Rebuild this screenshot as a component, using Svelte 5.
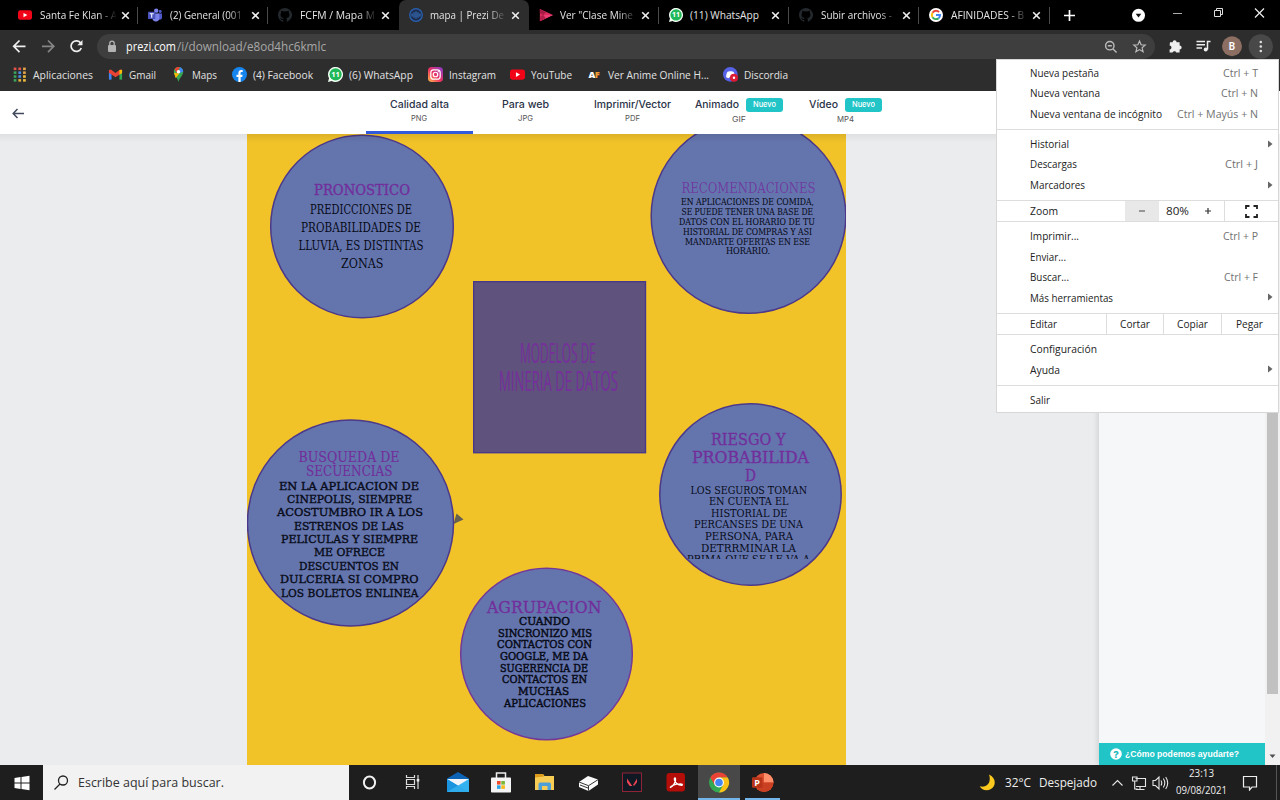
<script>
  const tabs = [
    ['yt', 'Santa Fe Klan - A', 77], ['teams', '(2) General (001', 72], ['github', 'FCFM / Mapa M', 75],
    ['prezi', 'mapa | Prezi De', 74], ['stream', 'Ver "Clase Mine', 73], ['wa', '(11) WhatsApp', 69],
    ['github', 'Subir archivos -', 71], ['google', 'AFINIDADES - B', 73]
  ];
  const bookmarks = [
    ['apps', 'Aplicaciones', 60, 33], ['gmail', 'Gmail', 27, 129], ['maps', 'Maps', 25, 192],
    ['fb', '(4) Facebook', 60, 253], ['wa', '(6) WhatsApp', 64, 349], ['insta', 'Instagram', 47, 449],
    ['yt', 'YouTube', 41, 531], ['af', 'Ver Anime Online H...', 101, 608], ['discord', 'Discordia', 44, 744]
  ];
  const formats = [
    ['Calidad alta', 59, 'PNG', 16], ['Para web', 47, 'JPG', 15], ['Imprimir/Vector', 77, 'PDF', 15],
    ['Animado', 44, 'GIF', 14, true], ['Vídeo', 29, 'MP4', 17, true]
  ];
  const top = [
    [['Nueva pestaña', 69, 'Ctrl + T', 35], ['Nueva ventana', 70, 'Ctrl + N', 37], ['Nueva ventana de incógnito', 132, 'Ctrl + Mayús + N', 81]],
    [['Historial', 39, '>'], ['Descargas', 47, 'Ctrl + J', 33], ['Marcadores', 55, '>']]
  ];
  const tools = [['Imprimir...', 49, 'Ctrl + P', 35], ['Enviar...', 36], ['Buscar...', 39, 'Ctrl + F', 34], ['Más herramientas', 83, '>']];
  const help = [['Configuración', 67], ['Ayuda', 30, '>']];
  const circles = [
    [362, 226.5, 91.3, '#4c398a'], [748.5, 216, 97.3, '#4c398a'], [350.5, 523, 103, '#4c398a'],
    [546.5, 654, 85.8, '#743997'], [750.5, 494.5, 90.7, '#4c398a']
  ];
  // text, left, right, baseline
  const blocks = [
    { size: 15, head: true, w: .4, lines: [['PRONOSTICO', 314, 410, 195.3]] },
    { size: 12.3, w: 0, lines: [['PREDICCIONES DE', 310, 412, 214], ['PROBABILIDADES DE', 301, 421, 232], ['LLUVIA, ES DISTINTAS', 298.5, 423.5, 250], ['ZONAS', 341, 383.5, 268]] },
    { size: 14.5, head: true, w: 0, thin: true, lines: [['RECOMENDACIONES', 681.5, 815.5, 193]] },
    { size: 9.2, w: .1, lines: [['EN APLICACIONES DE COMIDA,', 681, 814, 205], ['SE PUEDE TENER UNA BASE DE', 681.5, 813, 215], ['DATOS CON EL HORARIO DE TU', 679, 815, 224.6], ['HISTORIAL DE COMPRAS Y ASI', 683, 812, 234.5], ['MANDARTE OFERTAS EN ESE', 685, 810, 244.5], ['HORARIO.', 726, 770, 254]] },
    { size: 14.3, head: true, w: .15, lines: [['BUSQUEDA DE', 298.5, 399.5, 462], ['SECUENCIAS', 306, 392.5, 476.3]] },
    { size: 11.8, w: .4, lines: [['EN LA APLICACION DE', 279, 419, 489.8], ['CINEPOLIS, SIEMPRE', 287, 412, 503], ['ACOSTUMBRO IR A LOS', 277, 423, 516.3], ['ESTRENOS DE LAS', 294, 404, 529.8], ['PELICULAS Y SIEMPRE', 281, 418, 543], ['ME OFRECE', 314, 385, 556.3], ['DESCUENTOS EN', 299, 399, 569.8], ['DULCERIA SI COMPRO', 280, 418.5, 583], ['LOS BOLETOS ENLINEA', 281, 418.5, 596.5]] },
    { size: 16, head: true, w: .35, lines: [['AGRUPACION', 487, 601.5, 612.8]] },
    { size: 11.2, w: .5, lines: [['CUANDO', 519, 570, 625.3], ['SINCRONIZO MIS', 498, 592, 636.8], ['CONTACTOS CON', 497, 592, 648.4], ['GOOGLE, ME DA', 500, 588, 660], ['SUGERENCIA DE', 500, 588, 671.6], ['CONTACTOS EN', 502, 587, 683.3], ['MUCHAS', 518, 569, 694.8], ['APLICACIONES', 504, 586, 706.6]] },
    { size: 16, head: true, w: .35, lines: [['RIESGO Y', 711, 785.5, 444.8], ['PROBABILIDA', 692, 809, 462.8], ['D', 745, 756, 480.8]] },
    { size: 11.2, w: 0, clip: true, lines: [['LOS SEGUROS TOMAN', 690.5, 807, 493.6], ['EN CUENTA EL', 709, 788.5, 505.2], ['HISTORIAL DE', 711, 787.5, 516.8], ['PERCANSES DE UNA', 694, 803, 528.4], ['PERSONA, PARA', 705, 793, 540], ['DETRRMINAR LA', 701, 796, 551.6], ['PRIMA QUE SE LE VA A', 687, 810, 563.2]] }
  ];
</script>

{#snippet label(text, w, size = 11, color = '#222', weight = 400, family = 'Open Sans')}
  <svg class="label" width={w} height={size * 1.42} aria-label={text}>
    <text x="0" y={size * 1.07} textLength={w} lengthAdjust="spacingAndGlyphs" fill={color} style:font-size="{size}px" style:font-weight={weight} style:font-family="'{family}', sans-serif">{text}</text>
  </svg>
{/snippet}

{#snippet icon(name, size = 15)}
  <svg class="icon" width={size} height={size} viewBox="0 0 16 16">
    {#if name === 'yt'}
      <rect x="0" y="2.7" width="16" height="10.8" rx="2.6" fill="#f20418" /><path d="M6.3 5.6v5l4.4-2.5z" fill="#fff" />
    {:else if name === 'teams'}
      <circle cx="9.4" cy="3" r="2.5" fill="#7b83eb" /><circle cx="14" cy="4" r="1.7" fill="#5059c9" /><path d="M11 6.4h5v4.5c0 2-2 3-3.4 2.2z" fill="#5059c9" /><path d="M5 6.3h8v5.2c0 2.5-1.5 4-4 4s-4-1.5-4-4z" fill="#7b83eb" /><rect y="4.3" width="8.4" height="8.4" rx=".8" fill="#4b53bc" /><path d="M2 6.5h4.5M4.25 6.5v4.6" stroke="#fff" stroke-width="1.2" />
    {:else if name === 'github'}
      <path fill="#24292e" d="M8 0C3.58 0 0 3.58 0 8c0 3.54 2.29 6.53 5.47 7.59.4.07.55-.17.55-.38v-1.49c-2.01.37-2.53-.49-2.69-.94-.36-.92-.85-1.26-.85-1.26-.7-.48.05-.47.05-.47.77.05 1.18.8 1.18.8.7 1.19 1.87.86 2.33.66.07-.52.28-.86.51-1.06-1.78-.2-3.64-.89-3.64-3.95 0-.87.31-1.59.82-2.15-.08-.2-.36-1.02.08-2.12 0 0 .67-.21 2.2.82A7.4 7.4 0 0 1 8 3.77c.68 0 1.36.09 2 .27 1.53-1.04 2.2-.82 2.2-.82.44 1.1.16 1.92.08 2.12.51.56.82 1.27.82 2.15 0 3.07-1.87 3.75-3.65 3.95.29.25.54.73.54 1.48v2.29c0 .21.15.46.55.38A8 8 0 0 0 8 0z" />
    {:else if name === 'prezi'}
      <circle cx="8" cy="8" r="7.2" fill="#1d2f50" stroke="#2a62b5" stroke-width="1.4" /><path d="M3.5 6.3v3.4M5.750 5v6M8 4v8M10.250 5v6M12.500 6.300v3.400" stroke="#3f83dc" stroke-width="1" />
    {:else if name === 'stream'}
      <path d="M1 1.2 16 8 1 15z" fill="#dc2c5d" /><path d="M1 1.2 8 4.5 5 8 1 6z" fill="#a81b45" /><path d="M1 15 16 8H5z" fill="#ec3f75" /><path d="M1 10l4-2 3 4-7 3z" fill="#b31e4a" />
    {:else if name === 'wa'}
      <path d="M0 16 1.1 12A8 8 0 1 1 4 14.9z" fill="#f3fff5" /><circle cx="8.1" cy="7.9" r="6.5" fill="#20b858" /><text x="8" y="10.8" text-anchor="middle" font-size="8" font-weight="700" fill="#fff" font-family="Open Sans">11</text>
    {:else if name === 'google'}
      <circle cx="8" cy="8" r="8" fill="#fff" /><g fill="none" stroke-width="2.2"><path d="M4 5.4A4.7 4.7 0 0 1 11.5 4.7" stroke="#ea4335" /><path d="M4 5.4a4.7 4.7 0 0 0 0 5.2" stroke="#fbbc05" /><path d="M4 10.6a4.7 4.7 0 0 0 7 1" stroke="#34a853" /><path d="M11 11.6A4.6 4.6 0 0 0 12.7 8H8" stroke="#4285f4" /></g>
    {:else if name === 'apps'}
      {#each [0, 1, 2, 3] as r}{#each [0, 1, 2] as c}<rect x={1.8 + c * 5} y={.6 + r * 4.1} width="2.9" height="2.7" fill={[['#e5534b', '#e5534b', '#e5a34b'], ['#3ba55d', '#4b8ee5', '#e5a34b'], ['#3ba55d', '#4b8ee5', '#f0bd3c'], ['#3ba55d', '#e0b23c', '#f0bd3c']][r][c]} />{/each}{/each}
    {:else if name === 'gmail'}
      <path d="M1 3.5h2.8v10H1z" fill="#4285f4" /><path d="M12.2 3.5H15v10h-2.8z" fill="#34a853" /><path d="M1 3.2 3 2.7l5 3.8 5-3.8 2 .5v3L8 11 1 6.2z" fill="#ea4335" /><path d="M12.2 3.3 15 3v3.3l-2.8 2z" fill="#fbbc04" />
    {:else if name === 'maps'}
      <path d="M8 0a5 5 0 0 0-5 5c0 4 4 6.200 5 11 1-4.800 5-7 5-11a5 5 0 0 0-5-5z" fill="#34a853" /><path d="M3.800 2.300A5 5 0 0 1 9.600.3L6 6z" fill="#ea4335" /><path d="M9.600.3A5 5 0 0 1 13 5L8 7z" fill="#4285f4" /><path d="M3.200 6 9 7l-4 5z" fill="#fbbc04" /><circle cx="8" cy="5" r="1.900" fill="#fff" />
    {:else if name === 'fb'}
      <circle cx="8" cy="8" r="8" fill="#1686ee" /><path d="M6.800 16v-5.300H4.800V8.300h2V6.500c0-2.100 1.200-3.200 3-3.200.9 0 1.600.1 1.600.1v2h-1c-1 0-1.300.6-1.300 1.200v1.700h2.200l-.4 2.400H9.200V16z" fill="#fff" />
    {:else if name === 'insta'}
      <defs><linearGradient id="ig" x1="0" y1="1" x2="1" y2="0"><stop offset="0" stop-color="#fdc14a" /><stop offset=".45" stop-color="#f0325f" /><stop offset="1" stop-color="#8339cf" /></linearGradient></defs>
      <rect width="16" height="16" rx="4" fill="url(#ig)" /><rect x="3" y="3" width="10" height="10" rx="3" fill="none" stroke="#fff" stroke-width="1.300" /><circle cx="8" cy="8" r="2.400" fill="none" stroke="#fff" stroke-width="1.300" /><circle cx="11" cy="5" r=".7" fill="#fff" />
    {:else if name === 'af'}
      <text x="1.500" y="11.800" font-size="10" font-weight="800" font-family="Open Sans" fill="#fff">A</text><text x="8.300" y="11.800" font-size="10" font-weight="800" font-family="Open Sans" fill="#ef9b32">F</text>
    {:else if name === 'discord'}
      <circle cx="7.800" cy="7.800" r="7.800" fill="#5662e8" /><path d="M3.300 11c0-3 .8-5.300 1.700-6l2-.6h2l2 .6c.9.700 1.700 3 1.700 6l-2.600 1-1-1.200H7L6 12z" fill="#fff" /><circle cx="11.700" cy="11.500" r="4.300" fill="#dc1b35" /><circle cx="11.700" cy="11.500" r="1.300" fill="#fff" />
    {/if}
  </svg>
{/snippet}

{#snippet cross()}
  <svg class="icon" width="9" height="9" viewBox="0 0 9 9"><path d="M1.200 1.200 7.800 7.800M7.800 1.200 1.200 7.800" stroke="#eee" stroke-width="1.600" /></svg>
{/snippet}

{#snippet rows(items)}
  <div class="group">
    {#each items as [name, w, key, kw]}
      <div class="item">
        {@render label(name, w, 10.8)}
        {#if key === '>'}<svg class="arrow" width="5" height="8"><path d="M0 .5 4.500 4 0 7.500z" fill="#666" /></svg>
        {:else if key}{@render label(key, kw, 10.8, '#727272')}{/if}
      </div>
    {/each}
  </div>
{/snippet}

<div class="screen">
  <header class="tabstrip">
    {#each tabs as [ic, text, w], i}
      <div class="tab" class:active={i === 3} class:plain={i === 2}>
        {@render icon(ic, 14)}
        <div class="tabtext" class:fade={i !== 5}>{@render label(text, w, 10.8, '#e4e4e4')}</div>
        {@render cross()}
      </div>
    {/each}
    <svg class="plus" width="11" height="11"><path d="M5.500 0v11M0 5.500h11" stroke="#fff" stroke-width="1.700" /></svg>
    <svg class="winctl" width="140" height="30" viewBox="1130 0 140 30">
      <circle cx="1138.500" cy="15.300" r="6.500" fill="#fff" /><path d="M1135.700 13.700h5.600l-2.800 3.700z" fill="#111" />
      <path d="M1173 13.500h9" stroke="#aaa" /><path d="M1214.500 10.500h6v6h-6zM1216.500 10.500v-2h6v6h-2" fill="none" stroke="#ddd" /><path d="m1255 8.500 9 9m0-9-9 9" stroke="#eee" stroke-width="1.200" />
    </svg>
  </header>

  <div class="toolbar">
    <svg width="97" height="30" viewBox="0 0 97 30" fill="none" stroke-width="1.700">
      <path d="M25.500 16.300H14M19.500 10.500l-5.800 5.800 5.800 5.800" stroke="#eee" /><path d="M42 16.300h11.500M48 10.500l5.800 5.800-5.800 5.800" stroke="#858585" />
      <path d="M80.800 13.200A5.300 5.300 0 1 0 81.300 18" stroke="#eee" /><path d="M82.500 10v5.200h-5.200z" fill="#eee" />
    </svg>
    <div class="omnibox">
      <svg width="10" height="13" viewBox="0 0 10 13"><rect x="1" y="5" width="8" height="7" rx="1" fill="#b3b3b3" /><path d="M2.800 5V3.300a2.200 2.200 0 0 1 4.400 0V5" fill="none" stroke="#b3b3b3" stroke-width="1.300" /></svg>
      <div class="url">{@render label('prezi.com', 50, 12, '#fff')}{@render label('/i/download/e8od4hc6kmlc', 149, 12, '#a7a7a7')}</div>
      <svg width="44" height="16" viewBox="1103 38 44 16" fill="none" stroke="#bbb" stroke-width="1.400"><circle cx="1109.800" cy="44.700" r="4.200" /><path d="m1113 48 3.600 3.500M1107.800 44.700h4" /><path d="m1139.500 40 1.600 3.800 4.100.3-3.100 2.700 1 4-3.600-2.200-3.600 2.200 1-4-3.100-2.700 4.100-.3z" stroke-width="1.200" /></svg>
    </div>
    <svg width="125" height="30" viewBox="1155 30 125 30">
      <path d="M1170 42.200h2.600a2 2 0 0 1 4 0h3v3.300a2 2 0 0 1 0 4.100v3h-3.300a1.900 1.900 0 0 0-3.700 0h-3v-3.200a1.900 1.900 0 0 0 0-3.800z" fill="#eee" />
      <path d="M1196.500 41.500h8.500M1196.500 44.800h8.500M1196.500 48.100h5.500M1210.500 41.500h-3v8" fill="none" stroke="#eee" stroke-width="1.500" /><circle cx="1205.700" cy="49.500" r="2" fill="#eee" />
      <circle cx="1232" cy="46.300" r="10" fill="#8d6e63" /><text x="1232" y="50" text-anchor="middle" font-size="10" fill="#fff" font-weight="600" font-family="Roboto">B</text>
      <circle cx="1260.800" cy="46.500" r="12.200" fill="#484848" /><circle cx="1260.800" cy="42" r="1.300" fill="#ddd" /><circle cx="1260.800" cy="46.500" r="1.300" fill="#ddd" /><circle cx="1260.800" cy="51" r="1.300" fill="#ddd" />
    </svg>
  </div>

  <nav class="bookmarks">
    {#each bookmarks as [ic, text, w, x], i}
      <div class="bm" style:width="{(bookmarks[i + 1]?.[3] ?? x + 96) - x}px">
        {@render icon(ic, 15)}{@render label(text, w, 10.8, '#e2e2e2')}
      </div>
    {/each}
  </nav>

  <div class="formats">
    <svg class="back" width="13" height="11" viewBox="0 0 13 11" fill="none" stroke="#414a5c" stroke-width="1.500"><path d="M12 5.500H1.500M5.500 1 1.200 5.500l4.300 4.500" /></svg>
    {#each formats as [name, w, ext, ew, isNew], i}
      <div class="format" class:sel={i === 0} class:new={isNew}>
        <div class="fname">{@render label(name, w, 10.3, '#2a3348', 500, 'Inter')}{#if isNew}<span class="badge">{@render label('Nuevo', 23, 7.5, '#fff', 500, 'Inter')}</span>{/if}</div>
        {@render label(ext, ew, 7.5, '#555', 400, 'Inter')}
      </div>
    {/each}
  </div>

  <main>
    <div class="gutter"></div>
    <svg class="canvas" width="599" height="631" viewBox="247 134 599 631">
      <defs>
        <clipPath id="cut"><rect x="660" y="480" width="180" height="79" /></clipPath>
        <linearGradient id="shade" x2="0" y2="1"><stop stop-color="#000" stop-opacity=".09" /><stop offset="1" stop-color="#000" stop-opacity="0" /></linearGradient>
      </defs>
      <rect x="247" y="134" width="599" height="631" fill="#f2c329" />
      <path d="m456.500 513.500 7 6-10 4.500z" fill="#666053" />
      {#each circles as [cx, cy, r, s]}<circle {cx} {cy} {r} fill="#6475ae" stroke={s} stroke-width="1.500" />{/each}
      <rect x="473.700" y="281.700" width="171.800" height="171" fill="#5f527c" stroke="#49398a" stroke-width="1.400" />
      <g fill="#76309b" stroke="#76309b" stroke-width=".2" font-family="Liberation Sans Narrow, Open Sans" font-weight="400" font-size="28">
        <text x="520" y="363.300" textLength="76" lengthAdjust="spacingAndGlyphs">MODELOS DE</text>
        <text x="499" y="391.300" textLength="119" lengthAdjust="spacingAndGlyphs">MINERIA DE DATOS</text>
      </g>
      {#each blocks as b}
        <g font-family="DejaVu Serif, serif" font-size={b.size} fill={b.head ? '#722f9c' : '#080b18'} opacity={b.thin ? .8 : 1} stroke={b.head ? '#722f9c' : '#080b18'} stroke-width={b.w} clip-path={b.clip ? 'url(#cut)' : undefined}>
          {#each b.lines as [t, x1, x2, y]}<text x={x1} {y} textLength={x2 - x1} lengthAdjust="spacingAndGlyphs">{t}</text>{/each}
        </g>
      {/each}
      <rect x="247" y="134" width="599" height="9" fill="url(#shade)" />
    </svg>
    <div class="gutter grow"></div>
    <aside>
      <div class="help"><svg width="12" height="12"><circle cx="6" cy="6" r="5.800" fill="#fff" /><text x="6" y="9.500" text-anchor="middle" font-family="Inter" font-weight="800" font-size="9.500" fill="#20b9ba">?</text></svg>{@render label('¿Cómo podemos ayudarte?', 114, 9.5, '#fff', 700, 'Liberation Sans')}</div>
    </aside>
    <div class="scroll"><div class="thumb"></div><svg width="8" height="5"><path d="M.5.5h6L3.500 4z" fill="#505050" /></svg></div>
  </main>

  <footer>
    <div class="start"><svg width="16" height="16"><path d="M.5 3 6.500 2v5.500h-6zM7.500 1.900 15.500.7v6.800h-8zM.5 8.500h6V14l-6-1zM7.500 8.500h8v6.800l-8-1.200z" fill="#fff" /></svg></div>
    <div class="search">
      <svg width="16" height="16" fill="none" stroke="#222" stroke-width="1.300"><circle cx="10" cy="5.500" r="4.500" /><path d="M7 9 1.500 14.500" /></svg>
      {@render label('Escribe aquí para buscar.', 146, 13, '#333')}
    </div>
    <svg class="apps" width="440" height="35" viewBox="349 765 440 35">
      <ellipse cx="369.500" cy="782.500" rx="5.600" ry="6" fill="none" stroke="#f2f2f2" stroke-width="2" />
      <g fill="none" stroke="#ddd" stroke-width="1.200"><path d="M406.500 775v2.500h8V775M406.500 789v-2.500h8v2.500M406.500 779.500h8v5h-8zM418 775v14" /></g><rect x="416.700" y="779" width="2.600" height="2.500" fill="#eee" />
      <path d="M447 778.500 458 772l11 6.500v4h-22z" fill="#0c62b5" /><path d="M447 779h22v13h-22z" fill="#28a6ea" /><path d="M447 779h22l-11 7z" fill="#f1f5fa" /><path d="M447 792v-13l22 13z" fill="#1a94df" /><path d="M469 792v-13l-22 13z" fill="#39b9f3" opacity=".65" />
      <path d="M496.500 778v-5h9v5" fill="none" stroke="#eee" stroke-width="1.500" /><rect x="491" y="777.500" width="20" height="15" rx=".8" fill="#f4f4f4" /><path d="M497 781h3.600v3.600H497z" fill="#ef4b2b" /><path d="M501.300 781h3.600v3.600h-3.600z" fill="#7ab837" /><path d="M497 785.300h3.600v3.600H497z" fill="#2aa6e8" /><path d="M501.300 785.300h3.600v3.600h-3.600z" fill="#f9b91a" />
      <path d="M535 774h8l1.500 2H554v14h-19z" fill="#f7cc55" /><path d="M535 774h8l1 2.500-9 1z" fill="#dd9b1b" /><path d="M538.500 790v-6a1.500 1.500 0 0 1 1.500-1.500h9.500a1.500 1.500 0 0 1 1.500 1.500v6h-3.500v-4h-5.500v4z" fill="#4e9fd8" />
      <path d="m579 782 9-6 10 3.500v5l-9.500 6.500-9.500-4z" fill="#fafafa" /><path d="m579 782 9.500 3.700 9.500-6M588.500 785.700v5M580 785l8 3" fill="none" stroke="#333" stroke-width="1" />
      <rect x="622.500" y="773" width="19" height="18.500" fill="#101823" stroke="#8f2437" /><path d="m627 778.500 5.300 7.500h-2.600l-2.700-3.700zM637 778.500v3.800l-2.500 3.200h-1.700z" fill="#ef4454" />
      <rect x="666.500" y="773" width="18.500" height="18.500" rx="3" fill="#b50d08" /><path d="M670 787.500c3-1 6-5 5.500-8.500-.2-2-1.700-1-.9 1.200 1.200 3.300 4 5 7 5 1.500-.3.500-1.500-2-1.300-3.500.2-7.500 1.500-9.600 3.600z" fill="none" stroke="#fff" stroke-width="1.400" />
      <rect x="698" y="765" width="42" height="35" fill="#484848" /><path d="M698 798h42v2h-42zM745 798h35v2h-35z" fill="#74b6e9" />
      <circle cx="719" cy="782.500" r="10" fill="#33a852" /><path d="M710.300 777.500a10 10 0 0 1 17.400 0H719l-4.300 7.500z" fill="#e94335" /><path d="M727.700 777.500A10 10 0 0 1 719 792.500l4.300-7.500-4.300-7.500z" fill="#fbc116" /><circle cx="719" cy="782.500" r="4.900" fill="#fff" /><circle cx="719" cy="782.500" r="3.800" fill="#4285f4" />
      <circle cx="764" cy="782.500" r="9.500" fill="#dd5030" /><path d="M764 773a9.500 9.500 0 0 1 9.500 9.500H764z" fill="#ff8f6b" /><path d="M773.500 782.500a9.500 9.500 0 0 1-19 0z" fill="#c94022" /><rect x="752" y="777.300" width="10.500" height="10.500" rx="1" fill="#b83418" /><text x="757.200" y="786" text-anchor="middle" font-family="Open Sans" font-weight="700" font-size="9" fill="#fff">P</text>
    </svg>
    <div class="tray">
      <svg width="17" height="17"><path d="M10 .5c7 3 7.500 11 2 14.500C8 17.300 3 16.500.7 12.300c5 1.500 9-1.500 9.800-5.300.4-2.300.3-4.300-.5-6.500z" fill="#fbc91e" /></svg>
      <div class="weather">{@render label('32°C', 26, 12.3, '#eee')}{@render label('Despejado', 58, 12.3, '#eee')}</div>
      <svg width="60" height="20" viewBox="1110 773 60 20" fill="none" stroke="#e5e5e5" stroke-width="1.100"><path d="m1112.500 785.500 5-5 5 5M1135.500 778.500h10v8h-9.500M1140 786.500v3M1136 789.500h8.500M1132.500 777h4.500v4h-4.500zM1134.700 781v8h3M1153 780.500h2.500l3.500-3.500v12l-3.500-3.500h-2.500zM1161 780.500q1.500 2.500 0 5M1163.300 778.500q3 4.500 0 9M1165.700 777q4 6 0 12" /></svg>
      <div class="clock">{@render label('23:13', 25, 11.3, '#eee')}{@render label('09/08/2021', 51, 11.3, '#eee')}</div>
      <svg class="notif" width="16" height="16" fill="none" stroke="#eee" stroke-width="1.200"><path d="M1.500 1.500h13v10.500h-4.500l-2.500 3v-3h-6z" /></svg>
      <span class="desk"></span>
    </div>
  </footer>

  <div class="menu">
    {@render rows(top[0])}
    {@render rows(top[1])}
    <div class="inline">
      <div class="lead">{@render label('Zoom', 28, 10.8)}</div>
      <div class="minus"><svg width="6" height="2"><path d="M0 1h6" stroke="#444" /></svg></div>
      <div class="pct">{@render label('80%', 23, 10.8)}</div>
      <div class="add"><svg width="6" height="6"><path d="M0 3h6M3 0v6" stroke="#333" stroke-width="1.200" /></svg></div>
      <div class="full"><svg width="13" height="13" fill="none" stroke="#222" stroke-width="1.800"><path d="M1 4V1h3.500M8.500 1H12v3M12 9v3H8.500M4.500 12H1V9" /></svg></div>
    </div>
    {@render rows(tools)}
    <div class="inline">
      <div class="lead edit">{@render label('Editar', 27, 10.8)}</div>
      <div class="cell">{@render label('Cortar', 30, 10.8)}</div>
      <div class="cell">{@render label('Copiar', 31, 10.8)}</div>
      <div class="cell">{@render label('Pegar', 27, 10.8)}</div>
    </div>
    {@render rows(help)}
    {@render rows([['Salir', 20]])}
  </div>
</div>

<style>
  :global(body) { background: #ebecee; overflow: hidden; }
  .screen { width: 1280px; height: 800px; position: relative; overflow: hidden; display: flex; flex-direction: column; background: #ebecee; }
  svg { display: block; flex: none; }
  .label { overflow: visible; }
  .label text { white-space: pre; }
  .tabstrip { height: 30px; background: #000; display: flex; align-items: center; padding-left: 8px; box-sizing: border-box; flex: none; }
  .tab { width: 130.2px; height: 30px; box-sizing: border-box; padding-left: 10px; display: flex; align-items: center; position: relative; flex: none; }
  .tab::after { content: ''; position: absolute; right: 0; top: 7px; height: 17px; width: 1px; background: #4a4a4a; }
  .tab.plain::after, .tab.active::after { display: none; }
  .tab.active { background: #2d2d2d; border-radius: 7px 7px 0 0; }
  .tabtext { width: 77px; margin: 0 4px 0 7.5px; }
  .fade { -webkit-mask-image: linear-gradient(90deg, #000 75%, transparent 100%); mask-image: linear-gradient(90deg, #000 75%, transparent 100%); }
  .plus { margin-left: 14px; }
  .winctl { margin-left: auto; margin-right: 10px; }
  .toolbar { height: 30px; background: #2d2d2d; display: flex; align-items: center; flex: none; }
  .omnibox { flex: 1; height: 25px; margin-top: 3px; background: #3e3e3e; border-radius: 13px; display: flex; align-items: center; padding: 0 8px 0 10px; box-sizing: border-box; }
  .url { display: flex; flex: 1; gap: 1px; margin-left: 9px; }
  .bookmarks { height: 31px; background: #2d2d2d; display: flex; align-items: center; padding: 0 0 2px 11.5px; box-sizing: border-box; flex: none; }
  .bm { display: flex; align-items: center; gap: 6.5px; flex: none; }
  .formats { height: 43px; flex: none; background: #fff; display: flex; align-items: stretch; padding-left: 12px; box-sizing: border-box; }
  .back { align-self: center; margin: 2px 341px 0 0; }
  .format { width: 106.6px; box-sizing: border-box; display: flex; flex-direction: column; align-items: center; padding-top: 6px; }
  .format.sel { border-bottom: 3px solid #3159dc; }
  .fname { height: 15px; display: flex; align-items: center; gap: 7px; margin-bottom: 1px; }
  .new .fname { margin-bottom: 2px; }
  .badge { width: 37px; height: 14px; border-radius: 3px; background: #21c4c7; display: flex; align-items: center; justify-content: center; }
  main { height: 631px; flex: none; display: flex; }
  .gutter { width: 247px; background: linear-gradient(#dfe0e2, transparent 8px) #ebecee; }
  .grow { flex: 1; }
  aside { width: 166px; background: #f5f7f9; display: flex; flex-direction: column; justify-content: flex-end; box-shadow: -2px 0 5px #0000001a; }
  .help { height: 22px; box-sizing: border-box; background: #21c4c7; display: flex; align-items: center; gap: 3px; padding-left: 11px; }
  .scroll { width: 15px; background: #f1f1f1; display: flex; flex-direction: column; align-items: center; justify-content: space-between; padding-bottom: 6px; box-sizing: border-box; z-index: 1; }
  .thumb { width: 11px; height: 560px; background: #c1c1c1; }
  footer { height: 35px; flex: none; background: #1e1e1e; display: flex; }
  .start { width: 43px; display: flex; align-items: center; justify-content: center; }
  .search { width: 306px; background: #f2f2f2; display: flex; align-items: center; gap: 9px; padding-left: 10px; box-sizing: border-box; }
  .tray { flex: 1; display: flex; align-items: center; padding-left: 190px; }
  .weather { display: flex; gap: 8px; margin: 0 13px 0 9px; }
  .clock { width: 66px; display: flex; flex-direction: column; align-items: center; margin: -2px 0 0 -2px; }
  .notif { margin-left: 8px; }
  .desk { width: 1px; height: 35px; background: #555; margin-left: 18px; }
  .menu { position: absolute; left: 996px; top: 59px; width: 283px; height: 354px; box-sizing: border-box; background: #fff; border: 1px solid #d7d7d7; z-index: 3; display: flex; flex-direction: column; }
  .group { padding: 3.8px 0 5.4px; }
  .group + .group { border-top: 1px solid #ddd; }
  .group:first-child { padding-top: 2.2px; }
  .item { height: 20.4px; display: flex; align-items: center; justify-content: space-between; padding: 0 20px 0 33px; }
  .arrow { margin-right: -15px; }
  .inline { height: 22px; box-sizing: border-box; border-top: 1px solid #ddd; border-bottom: 1px solid #ddd; display: flex; flex: none; }
  .inline div { display: flex; align-items: center; justify-content: center; }
  .inline .lead { width: 128px; box-sizing: border-box; padding-left: 33px; justify-content: flex-start; }
  .inline .edit { width: 109px; }
  .minus { width: 34px; background: #e8e8e8; }
  .inline .pct { width: 37px; padding-bottom: 1px; }
  .inline .add { width: 23px; padding-right: 5px; }
  .inline .full { flex: 1; border-left: 1px solid #ddd; padding-right: 1px; }
  .cell { flex: 1; border-left: 1px solid #ddd; }
</style>
